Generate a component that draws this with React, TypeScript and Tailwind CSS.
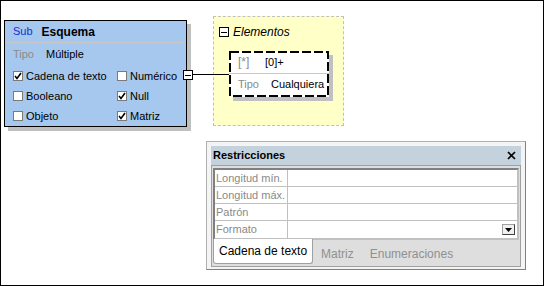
import React from "react"

const font = { fontFamily: "'Liberation Sans', Arial, sans-serif" }

function Check({ on }: { on?: boolean }) {
  return (
    <span className="flex h-[10px] w-[10px] shrink-0 items-center justify-center border border-[#7a7a7a] bg-white">
      {on && (
        <svg width="8" height="8" viewBox="0 0 8 8">
          <path d="M1 4 L3 6.5 L7 1" fill="none" stroke="#000" strokeWidth="1.6" />
        </svg>
      )}
    </span>
  )
}

function MinusBox() {
  return (
    <span className="flex h-[10px] w-[10px] shrink-0 items-center justify-center border border-black bg-white">
      <span className="h-px w-[6px] bg-black" />
    </span>
  )
}

function Opt({ on, label }: { on?: boolean; label: string }) {
  return (
    <div className="flex h-[20px] items-center gap-[3px] whitespace-nowrap">
      <Check on={on} />
      <span>{label}</span>
    </div>
  )
}

export default function App() {
  return (
    <div className="relative h-[286px] w-[544px] overflow-hidden border border-black bg-white text-[11px] text-black" style={font}>
      {/* schema node */}
      <div className="absolute left-[3px] top-[19px] h-[107px] w-[183px] border border-black bg-[#a6c8ee] shadow-[4px_4px_0_#c0c0c0]">
        <div className="flex h-[22px] items-center gap-[9px] border-b border-[#c8c8c8] pl-[8px]">
          <span className="text-[#1030d0]">Sub</span>
          <span className="text-[12px] font-bold">Esquema</span>
        </div>
        <div className="flex h-[23px] items-center gap-[12px] pl-[8px]">
          <span className="text-[#8a8a8a]">Tipo</span>
          <span>Múltiple</span>
        </div>
        <div className="grid grid-cols-[104px_1fr] pl-[8px]">
          <Opt on label="Cadena de texto" />
          <Opt label="Numérico" />
          <Opt label="Booleano" />
          <Opt on label="Null" />
          <Opt label="Objeto" />
          <Opt on label="Matriz" />
        </div>
      </div>

      {/* connector */}
      <div className="absolute left-[182px] top-[69px]">
        <MinusBox />
      </div>

      {/* elementos group */}
      <div className="absolute left-[212px] top-[15px] h-[110px] w-[131px] border border-dashed border-[#c0c0c0] bg-[#ffffc8]">
        <div className="flex items-center gap-[4px] pl-[5px] pt-[6px] text-[12px] italic">
          <MinusBox />
          <span>Elementos</span>
        </div>
      </div>
      <div className="absolute left-[192px] top-[73px] h-px w-[37px] bg-black" />

      {/* element node */}
      <div className="absolute left-[228px] top-[50px] h-[46px] w-[100px] bg-white shadow-[4px_4px_0_#c0c0c0]">
        <svg className="absolute inset-0" width="100" height="46">
          <rect x="1" y="1" width="98" height="44" fill="none" stroke="#000" strokeWidth="2" strokeDasharray="9 3" />
        </svg>
        <div className="relative flex h-[23px] items-center border-b border-[#c8c8c8] pl-[9px] whitespace-nowrap">
          <span className="w-[27px] text-[12px] text-[#8a8a8a]">[*]</span>
          <span>[0]+</span>
        </div>
        <div className="relative flex h-[21px] items-center pl-[9px] whitespace-nowrap">
          <span className="w-[33px] text-[#8a8a8a]">Tipo</span>
          <span>Cualquiera</span>
        </div>
      </div>

      {/* restricciones panel */}
      <div className="absolute left-[205px] top-[140px] flex h-[129px] w-[320px] flex-col border border-[#b0b0b0] border-b-[#808080] border-r-[#808080] bg-[#f4f4f4] p-[4px]">
        <div className="flex h-[19px] shrink-0 items-center justify-between bg-[#c4d2de] pl-[2px] pr-[5px]">
          <span className="font-bold">Restricciones</span>
          <svg width="9" height="9" viewBox="0 0 9 9">
            <path d="M1 1 L8 8 M8 1 L1 8" stroke="#000" strokeWidth="1.7" />
          </svg>
        </div>
        <div className="flex flex-1 flex-col border border-[#a0a0a0] bg-[#dedede] px-[1px] pt-[2px]">
          <div className="border-2 border-[#808080] border-b-[#c0c0c0] border-r-[#c0c0c0] bg-white text-[#8a8a8a]">
            {["Longitud mín.", "Longitud máx.", "Patrón", "Formato"].map((l, i) => (
              <div key={l} className={`flex h-[17px] ${i < 3 ? "border-b border-[#c0c0c0]" : ""}`}>
                <span className="w-[73px] whitespace-nowrap border-r border-[#c0c0c0] pl-[1px] leading-[16px]">{l}</span>
                <div className="flex flex-1 items-center justify-end pr-[2px]">
                  {i === 3 && (
                    <span className="flex h-[11px] w-[13px] items-center justify-center border border-[#a0a0a0] border-b-[#404040] border-r-[#404040] bg-[#f0f0f0]">
                      <svg width="7" height="4" viewBox="0 0 7 4">
                        <path d="M0 0 H7 L3.5 4 Z" fill="#000" />
                      </svg>
                    </span>
                  )}
                </div>
              </div>
            ))}
          </div>
          <div className="flex h-[26px] items-start whitespace-nowrap text-[12px]">
            <div className="-mt-px flex h-[25px] items-center rounded-b-[3px] border border-t-0 border-[#a0a0a0] bg-white px-[5px]">
              Cadena de texto
            </div>
            <span className="ml-[8px] mt-[5px] text-[#909090]">Matriz</span>
            <span className="ml-[16px] mt-[5px] text-[#909090]">Enumeraciones</span>
          </div>
        </div>
      </div>
    </div>
  )
}
